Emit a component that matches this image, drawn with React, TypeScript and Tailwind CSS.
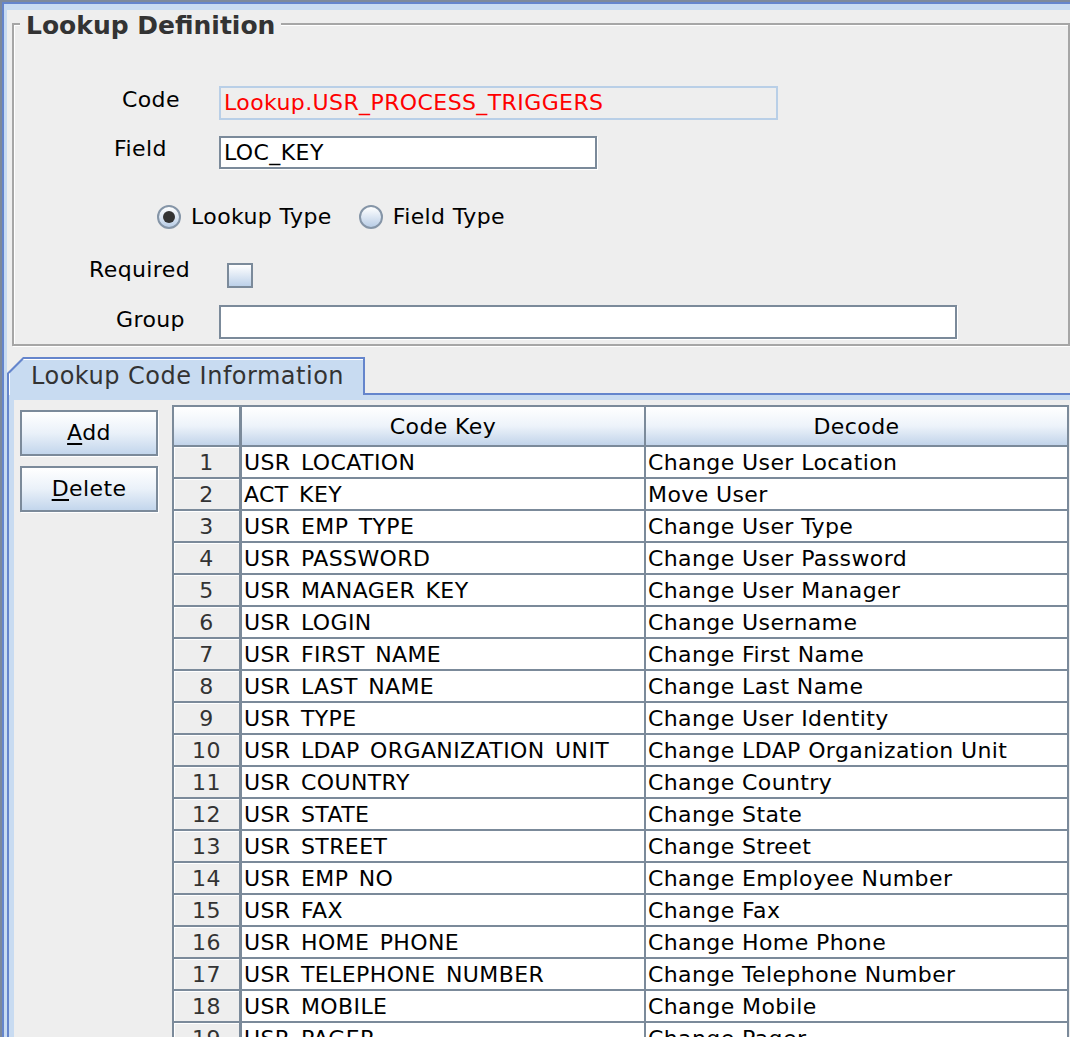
import React from 'react'

const rows: [string, string][] = [
  ['USR LOCATION', 'Change User Location'],
  ['ACT KEY', 'Move User'],
  ['USR EMP TYPE', 'Change User Type'],
  ['USR PASSWORD', 'Change User Password'],
  ['USR MANAGER KEY', 'Change User Manager'],
  ['USR LOGIN', 'Change Username'],
  ['USR FIRST NAME', 'Change First Name'],
  ['USR LAST NAME', 'Change Last Name'],
  ['USR TYPE', 'Change User Identity'],
  ['USR LDAP ORGANIZATION UNIT', 'Change LDAP Organization Unit'],
  ['USR COUNTRY', 'Change Country'],
  ['USR STATE', 'Change State'],
  ['USR STREET', 'Change Street'],
  ['USR EMP NO', 'Change Employee Number'],
  ['USR FAX', 'Change Fax'],
  ['USR HOME PHONE', 'Change Home Phone'],
  ['USR TELEPHONE NUMBER', 'Change Telephone Number'],
  ['USR MOBILE', 'Change Mobile'],
  ['USR PAGER', 'Change Pager'],
]

function Radio({ checked }: { checked?: boolean }) {
  return (
    <span className="w-[24px] h-[24px] rounded-full border-2 border-[#8595a7] bg-gradient-to-b from-white to-[#b9cde6] flex items-center justify-center shrink-0">
      {checked && <span className="w-[12px] h-[12px] rounded-full bg-[#333333]" />}
    </span>
  )
}

function Button({ hot, rest }: { hot: string; rest: string }) {
  return (
    <button className="h-[46px] w-full border-2 border-[#7b8a9a] bg-gradient-to-b from-white via-[#eaf1f9] to-[#c3d6ec] text-[22px] leading-[26px] tracking-[0.4px] text-black shadow-[1px_1px_0_#ffffff]">
      <span className="underline decoration-[1.5px] underline-offset-[3px]">{hot}</span>{rest}
    </button>
  )
}

export default function App() {
  return (
    <div className="w-[1070px] h-[1037px] overflow-hidden border-t-[2px] border-l-[2px] border-[#7d899b] font-['DejaVu_Sans',sans-serif] text-[22px] tracking-[0.4px] text-black">
      <div className="h-full border-t-[2px] border-l-[2px] border-[#6585cc]">
        <div className="h-full flex flex-col border-t-[6px] border-l-[3px] border-[#c8dbf1] bg-[#eeeeee]">

          {/* Lookup Definition */}
          <div className="relative mt-[13px] ml-[5px] h-[323px] shrink-0 border-2 border-[#a6a6a6] shadow-[inset_1px_1px_0_#ffffff,1px_1px_0_#ffffff]">
            <div className="absolute left-[6px] top-[-14px] px-[6px] bg-[#eeeeee] text-[25px] leading-[30px] font-bold tracking-normal text-[#333333]">
              Lookup Definition
            </div>
            <div className="flex flex-col pt-[61px]">
              <div className="flex h-[34px]">
                <div className="w-[205px] pl-[108px] mt-[1px] leading-[26px]">Code</div>
                <div className="w-[559px] h-[34px] border-2 border-[#b9cfe7] bg-[#eeeeee] pl-[3px] leading-[30px] text-[#ff0000]">
                  Lookup.USR_PROCESS_TRIGGERS
                </div>
              </div>
              <div className="flex h-[33px] mt-[16px]">
                <div className="w-[205px] pl-[100px] leading-[26px]">Field</div>
                <div className="w-[378px] h-[33px] border-2 border-[#7b8a9a] bg-white pl-[3px] leading-[29px] shadow-[1px_1px_0_#ffffff]">
                  LOC_KEY
                </div>
              </div>
              <div className="flex items-center h-[26px] mt-[35px] pl-[143px] leading-[26px]">
                <Radio checked />
                <span className="ml-[10px]">Lookup Type</span>
                <span className="ml-[27px]"><Radio /></span>
                <span className="ml-[10px]">Field Type</span>
              </div>
              <div className="flex mt-[27px]">
                <div className="w-[213px] pl-[75px] leading-[26px]">Required</div>
                <div className="mt-[6px] w-[26px] h-[25px] border-2 border-[#7b8a9a] bg-gradient-to-b from-white to-[#bdd1e9]" />
              </div>
              <div className="flex h-[34px] mt-[17px]">
                <div className="w-[205px] pl-[102px] mt-[2px] leading-[26px]">Group</div>
                <div className="w-[738px] h-[34px] border-2 border-[#7b8a9a] bg-white shadow-[1px_1px_0_#ffffff]" />
              </div>
            </div>
          </div>

          {/* Tab strip */}
          <div className="flex h-[38px] mt-[11px] shrink-0">
            <div className="w-[358px] h-[38px] bg-[#6585cc] pt-[2px] px-[2px] [clip-path:polygon(16px_0,100%_0,100%_100%,0_100%,0_16px)]">
              <div className="h-full bg-[#c8dbf1] pl-[22px] text-[24px] leading-[34px] tracking-[0.5px] text-[#333333] shadow-[inset_1px_1px_0_#ffffff] [clip-path:polygon(15px_0,100%_0,100%_100%,0_100%,0_15px)]">
                Lookup Code Information
              </div>
            </div>
            <div className="flex-1 border-b-2 border-[#6585cc]" />
          </div>

          {/* Tab panel */}
          <div className="flex-1 flex flex-col min-h-0 border-l-2 border-[#6585cc] bg-[#c8dbf1] pt-[5px] pl-[5px]">
            <div className="flex-1 flex min-h-0 bg-[#eeeeee] pt-[5px] pl-[6px]">
              <div className="w-[138px] shrink-0 flex flex-col gap-[10px] pt-[5px]">
                <Button hot="A" rest="dd" />
                <Button hot="D" rest="elete" />
              </div>

              <div className="ml-[14px] w-[897px] shrink-0 border-2 border-b-0 border-[#7b8a9a] bg-white">
                <div className="flex h-[40px] border-b-2 border-[#7b8a9a]">
                  <div className="w-[68px] border-r-[3px] border-[#7b8a9a] bg-gradient-to-b from-white via-[#edf3fa] to-[#c2d4ea]" />
                  <div className="w-[404px] border-r-2 border-[#7b8a9a] bg-gradient-to-b from-white via-[#edf3fa] to-[#c2d4ea] text-center pt-[2px] leading-[36px]">
                    Code Key
                  </div>
                  <div className="flex-1 bg-gradient-to-b from-white via-[#edf3fa] to-[#c2d4ea] text-center pt-[2px] leading-[36px]">
                    Decode
                  </div>
                </div>
                {rows.map(([key, decode], i) => (
                  <div key={i} className="flex h-[32px] border-b-2 border-[#7b8a9a]">
                    <div className="w-[68px] border-r-[3px] border-[#7b8a9a] bg-[#eeeeee] text-center text-[#333333] pt-[2px] leading-[28px] shadow-[inset_1px_1px_0_#ffffff]">
                      {i + 1}
                    </div>
                    <div className="w-[404px] border-r-2 border-[#7b8a9a] pl-[2px] pt-[2px] leading-[28px] whitespace-nowrap overflow-hidden [word-spacing:3px]">
                      {key}
                    </div>
                    <div className="flex-1 pl-[2px] pt-[2px] leading-[28px] whitespace-nowrap overflow-hidden">
                      {decode}
                    </div>
                  </div>
                ))}
              </div>
            </div>
          </div>

        </div>
      </div>
    </div>
  )
}
